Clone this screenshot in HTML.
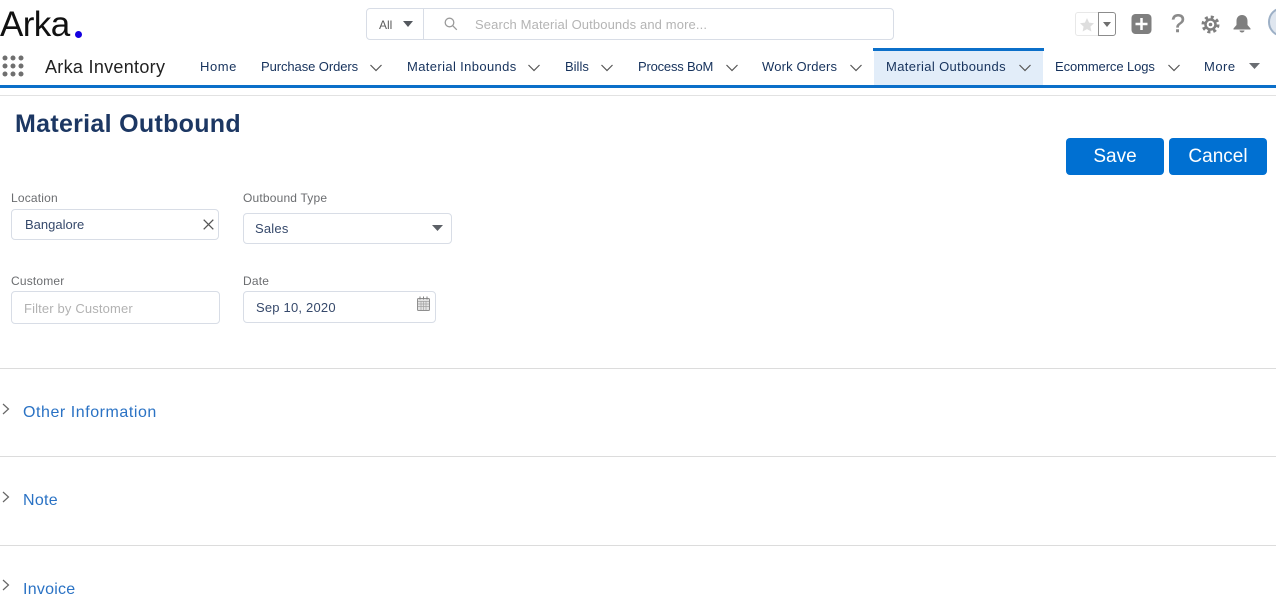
<!DOCTYPE html>
<html><head><meta charset="utf-8"><style>
html,body{margin:0;padding:0;background:#fff}
body{width:1276px;height:599px;overflow:hidden;position:relative;font-family:"Liberation Sans",sans-serif;color:#16325c}
.t{position:absolute;white-space:nowrap;line-height:16px}
.n{font-size:13px;color:#16325c;top:59px;letter-spacing:.25px}
.a{position:absolute}
.l{font-size:12px;letter-spacing:.18px;color:#6b6d70}
.box{position:absolute;box-sizing:border-box;border:1px solid #d8dde6;border-radius:4px;background:#fff}
.hr{position:absolute;left:0;width:1276px;height:1px;background:#dcdcdc}
.s{font-size:16px;color:#2a72c4;letter-spacing:.55px}
.btn{position:absolute;top:138px;height:37px;background:#0070d2;border-radius:4px;color:#fff;font-size:19px;text-align:center;line-height:38px}
</style></head><body>
<div class="t" style="left:0;top:5px;font-size:35px;line-height:40px;color:#111;letter-spacing:-.6px">Arka</div>
<div class="a" style="left:75px;top:31px;width:7px;height:7px;border-radius:50%;background:#1400e0"></div>

<div class="box" style="left:366px;top:8px;width:528px;height:32px"></div>
<div class="a" style="left:423px;top:9px;width:1px;height:30px;background:#d8dde6"></div>
<div class="t" style="left:379px;top:17px;font-size:12px;color:#5c5c5c">All</div>
<svg class="a" style="left:403px;top:21px" width="10" height="6"><path d="M0 0h10L5 6z" fill="#54585e"/></svg>
<svg class="a" style="left:444px;top:17px" width="14" height="14" fill="none" stroke="#9b9b9b" stroke-width="1.300"><circle cx="5.500" cy="5.500" r="4.300"/><path d="M8.700 8.700L12.800 12.800"/></svg>
<div class="t" style="left:475px;top:17px;font-size:13px;color:#b4b4b4;letter-spacing:.12px">Search Material Outbounds and more...</div>

<div class="box" style="left:1075px;top:12px;width:24px;height:24px;border-color:#e8e8e8;border-radius:3px 0 0 3px"></div>
<svg class="a" style="left:1080px;top:18px" width="14" height="14"><path d="M7 0l2.100 4.600 4.900.6-3.600 3.400 1 4.900L7 11.100l-4.400 2.400 1-4.900L0 5.200l4.900-.6z" fill="#dedede"/></svg>
<div class="box" style="left:1098px;top:12px;width:18px;height:24px;border-color:#8c8c8c;border-radius:0 3px 3px 0"></div>
<svg class="a" style="left:1103px;top:22px" width="8" height="5"><path d="M0 0h8L4 5z" fill="#6e6e6e"/></svg>
<svg class="a" style="left:1131px;top:14px" width="21" height="21"><rect x=".5" width="20" height="20" rx="4" fill="#7f7f7f"/><path d="M10.500 4v12M4.500 10h12" stroke="#fff" stroke-width="2.500"/></svg>
<div class="t" style="left:1171px;top:11px;font-size:25px;line-height:26px;color:#8a8a8a;-webkit-text-stroke:.5px #8a8a8a">?</div>
<svg class="a" style="left:1201px;top:15px" width="19" height="19" fill="none"><circle cx="9.500" cy="9.500" r="7.500" stroke="#7f7f7f" stroke-width="3" stroke-dasharray="3 2.890"/><circle cx="9.500" cy="9.500" r="5" stroke="#7f7f7f" stroke-width="2.500"/><circle cx="9.500" cy="9.500" r="1.800" fill="#7f7f7f"/></svg>
<svg class="a" style="left:1232px;top:14px" width="20" height="19"><path d="M10 1c3.500 0 5.500 2.600 5.500 6v4l3 3.500v1H1.500v-1l3-3.500V7c0-3.400 2-6 5.500-6z" fill="#7f7f7f"/><path d="M7.500 16.500h5a2.500 2 0 0 1-5 0z" fill="#7f7f7f"/></svg>
<div class="a" style="left:1268px;top:7px;width:30px;height:30px;box-sizing:border-box;border-radius:50%;background:#dfe6ef;border:2px solid #9db0c6"></div>

<svg class="a" style="left:2px;top:55px" width="23" height="23" fill="#6f6f6f"><circle cx="3" cy="3" r="2.500"/><circle cx="11" cy="3" r="2.500"/><circle cx="19" cy="3" r="2.500"/><circle cx="3" cy="11" r="2.500"/><circle cx="11" cy="11" r="2.500"/><circle cx="19" cy="11" r="2.500"/><circle cx="3" cy="19" r="2.500"/><circle cx="11" cy="19" r="2.500"/><circle cx="19" cy="19" r="2.500"/></svg>
<div class="t" style="left:45px;top:57px;font-size:18px;line-height:20px;color:#222;letter-spacing:.3px">Arka Inventory</div>

<div class="a" style="left:874px;top:50px;width:169px;height:35px;background:#e2edf9"></div>
<div class="a" style="left:873px;top:48px;width:171px;height:3px;background:#0b6fc9"></div>
<div class="a" style="left:0;top:85px;width:1276px;height:3px;background:#0b6fc9"></div>
<div class="a" style="left:0;top:95px;width:1276px;height:1px;background:#e2e2e2"></div>

<div class="t n" style="left:200px;letter-spacing:.55px">Home</div>
<div class="t n" style="left:261px;letter-spacing:-.08px">Purchase Orders</div>
<div class="t n" style="left:407px;letter-spacing:.37px">Material Inbounds</div>
<div class="t n" style="left:565px;letter-spacing:0">Bills</div>
<div class="t n" style="left:638px;letter-spacing:-.2px">Process BoM</div>
<div class="t n" style="left:762px;letter-spacing:.16px">Work Orders</div>
<div class="t n" style="left:886px;letter-spacing:.36px">Material Outbounds</div>
<div class="t n" style="left:1055px;letter-spacing:-.1px">Ecommerce Logs</div>
<div class="t n" style="left:1204px;letter-spacing:.5px">More</div>
<svg class="a" style="left:370px;top:64px" width="12" height="8" fill="none" stroke="#555" stroke-width="1.200"><path d="M.5 1l5.500 5.500L11.500 1"/></svg>
<svg class="a" style="left:528px;top:64px" width="12" height="8" fill="none" stroke="#555" stroke-width="1.200"><path d="M.5 1l5.500 5.500L11.500 1"/></svg>
<svg class="a" style="left:601px;top:64px" width="12" height="8" fill="none" stroke="#555" stroke-width="1.200"><path d="M.5 1l5.500 5.500L11.500 1"/></svg>
<svg class="a" style="left:726px;top:64px" width="12" height="8" fill="none" stroke="#555" stroke-width="1.200"><path d="M.5 1l5.500 5.500L11.500 1"/></svg>
<svg class="a" style="left:850px;top:64px" width="12" height="8" fill="none" stroke="#555" stroke-width="1.200"><path d="M.5 1l5.500 5.500L11.500 1"/></svg>
<svg class="a" style="left:1019px;top:64px" width="12" height="8" fill="none" stroke="#555" stroke-width="1.200"><path d="M.5 1l5.500 5.500L11.500 1"/></svg>
<svg class="a" style="left:1168px;top:64px" width="12" height="8" fill="none" stroke="#555" stroke-width="1.200"><path d="M.5 1l5.500 5.500L11.500 1"/></svg>
<svg class="a" style="left:1249px;top:63px" width="11" height="6"><path d="M0 0h11L5.500 6z" fill="#6a6d72"/></svg>

<div class="t" style="left:15px;top:109px;font-size:25px;line-height:30px;font-weight:bold;color:#1c3763;letter-spacing:.3px">Material Outbound</div>
<div class="btn" style="left:1066px;width:98px">Save</div>
<div class="btn" style="left:1169px;width:98px">Cancel</div>

<div class="t l" style="left:11px;top:190px">Location</div>
<div class="box" style="left:11px;top:209px;width:208px;height:31px"></div>
<div class="t" style="left:25px;top:217px;font-size:13px;color:#36496b">Bangalore</div>
<svg class="a" style="left:203px;top:219px" width="11" height="11" fill="none" stroke="#555" stroke-width="1.300"><path d="M.7.700l9.600 9.600M10.300.700L.7 10.300"/></svg>

<div class="t l" style="left:243px;top:190px">Outbound Type</div>
<div class="box" style="left:243px;top:213px;width:209px;height:31px"></div>
<div class="t" style="left:255px;top:221px;font-size:13px;color:#36496b;letter-spacing:.2px">Sales</div>
<svg class="a" style="left:432px;top:225px" width="11" height="6"><path d="M0 0h11L5.500 6z" fill="#5c6066"/></svg>

<div class="t l" style="left:11px;top:273px">Customer</div>
<div class="box" style="left:11px;top:291px;width:209px;height:33px"></div>
<div class="t" style="left:24px;top:301px;font-size:13px;color:#b2b2b2;letter-spacing:.15px">Filter by Customer</div>

<div class="t l" style="left:243px;top:273px">Date</div>
<div class="box" style="left:243px;top:291px;width:193px;height:32px"></div>
<div class="t" style="left:256px;top:300px;font-size:13px;color:#36496b;letter-spacing:.2px">Sep 10, 2020</div>
<svg class="a" style="left:417px;top:296px" width="13" height="15"><rect x=".5" y="2.500" width="12" height="12" rx="1" fill="#e4e4e4" stroke="#8f8f8f"/><path d="M1 5.500h11M1 8h11M1 10.500h11M4 5v9M6.500 5v9M9 5v9" stroke="#a3a3a3" stroke-width=".7"/><path d="M3 .5v3M6.500 .5v3M10 .5v3" stroke="#7f7f7f"/></svg>

<div class="hr" style="top:368px"></div>
<div class="hr" style="top:456px"></div>
<div class="hr" style="top:545px"></div>
<svg class="a" style="left:2px;top:403px" width="8" height="12" fill="none" stroke="#666" stroke-width="1.200"><path d="M1 1l5.500 5-5.500 5"/></svg>
<svg class="a" style="left:2px;top:491px" width="8" height="12" fill="none" stroke="#666" stroke-width="1.200"><path d="M1 1l5.500 5-5.500 5"/></svg>
<svg class="a" style="left:2px;top:579px" width="8" height="12" fill="none" stroke="#666" stroke-width="1.200"><path d="M1 1l5.500 5-5.500 5"/></svg>
<div class="t s" style="left:23px;top:405px">Other Information</div>
<div class="t s" style="left:23px;top:493px;letter-spacing:.3px">Note</div>
<div class="t s" style="left:23px;top:582px;letter-spacing:.25px">Invoice</div>
</body></html>
